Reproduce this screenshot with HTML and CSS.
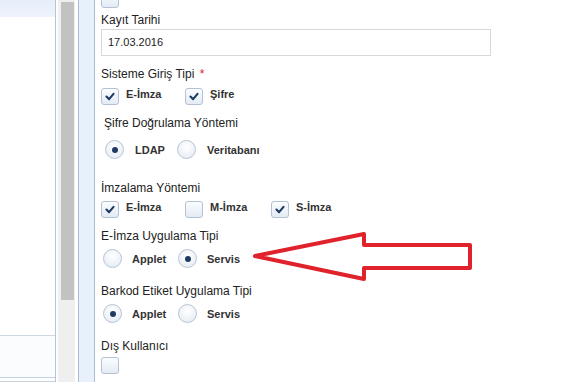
FILE: index.html
```html
<!DOCTYPE html>
<html>
<head>
  <meta charset="UTF-8">
  <title>Kullanıcı</title>
  <link rel="stylesheet" href="styles.css">
</head>
<body>
  <div class="left-panel">
    <div class="left-head"></div>
    <div class="left-list"></div>
    <div class="left-foot"></div>
    <div class="left-end"></div>
  </div>

  <div class="scroll-track"><div class="scroll-thumb"></div></div>

  <div class="side-strip"></div>

  <div class="form">
    <div class="cb top-cb"></div>

    <div class="label first">Kayıt Tarihi</div>
    <div class="input">17.03.2016</div>

    <div class="label gap-md">Sisteme Giriş Tipi <span class="req">*</span></div>
    <div class="row cb-row">
      <div class="opt w84"><div class="cb checked"><svg viewBox="0 0 17 17"><polyline points="4.5,8.5 7.5,11.5 12.5,5.5"/></svg></div><span>E-İmza</span></div>
      <div class="opt"><div class="cb checked"><svg viewBox="0 0 17 17"><polyline points="4.5,8.5 7.5,11.5 12.5,5.5"/></svg></div><span>Şifre</span></div>
    </div>

    <div class="label gap-md indent">Şifre Doğrulama Yöntemi</div>
    <div class="row radio-row ldap">
      <div class="opt w72"><div class="radio on"></div><span>LDAP</span></div>
      <div class="opt"><div class="radio"></div><span>Veritabanı</span></div>
    </div>

    <div class="label gap-lg">İmzalama Yöntemi</div>
    <div class="row cb-row near">
      <div class="opt w84"><div class="cb checked"><svg viewBox="0 0 17 17"><polyline points="4.5,8.5 7.5,11.5 12.5,5.5"/></svg></div><span>E-İmza</span></div>
      <div class="opt w86"><div class="cb"></div><span>M-İmza</span></div>
      <div class="opt"><div class="cb checked"><svg viewBox="0 0 17 17"><polyline points="4.5,8.5 7.5,11.5 12.5,5.5"/></svg></div><span>S-İmza</span></div>
    </div>

    <div class="label gap-md">E-İmza Uygulama Tipi</div>
    <div class="row radio-row near">
      <div class="opt w75"><div class="radio"></div><span>Applet</span></div>
      <div class="opt"><div class="radio on"></div><span>Servis</span></div>
    </div>

    <div class="label gap-lg2">Barkod Etiket Uygulama Tipi</div>
    <div class="row radio-row near">
      <div class="opt w75"><div class="radio on"></div><span>Applet</span></div>
      <div class="opt"><div class="radio"></div><span>Servis</span></div>
    </div>

    <div class="label gap-lg2">Dış Kullanıcı</div>
    <div class="cb last-cb"></div>
  </div>

  <svg class="arrow" width="570" height="382" viewBox="0 0 570 382">
    <polygon points="255,256 364,234 364,245 470,245 470,268 364,268 364,279"/>
  </svg>
</body>
</html>
```

FILE: styles.css
```css
body {
  margin: 0;
  width: 570px;
  height: 382px;
  overflow: hidden;
  display: flex;
  position: relative;
  background: #fff;
  font-family: "Liberation Sans", Arial, sans-serif;
  color: #222;
}

/* left list panel */
.left-panel {
  width: 55px;
  border-right: 1px solid #b3c5da;
  display: flex;
  flex-direction: column;
  flex-shrink: 0;
}
.left-head {
  height: 17px;
  background: linear-gradient(#e6eefa, #eff4fc);
}
.left-list {
  height: 318px;
  border-bottom: 1px solid #cdd8e3;
}
.left-foot {
  height: 41px;
  background: #fafcfe;
  border-bottom: 1px solid #c4d2e0;
}
.left-end {
  margin-top: 3px;
  border-top: 1px solid #c4d2e0;
}

/* scrollbar */
.scroll-track {
  width: 17px;
  margin-left: 2px;
  background: #efefef;
  padding: 2px 1px 0 3px;
  box-sizing: border-box;
  flex-shrink: 0;
}
.scroll-thumb {
  height: 298px;
  background: #c2c2c2;
}

/* side strip */
.side-strip {
  width: 15px;
  margin-left: 3px;
  background: #e8f0fc;
  border-left: 1px solid #a9bdd6;
  border-right: 1px solid #a9bdd6;
  flex-shrink: 0;
}

/* form */
.form {
  flex: 1;
  padding-left: 6px;
}
.label {
  font-size: 12px;
  line-height: 14px;
  height: 14px;
  white-space: nowrap;
}
.label.first { margin-top: 5px; }
.gap-md { margin-top: 11px; }
.gap-lg { margin-top: 22px; }
.gap-lg2 { margin-top: 16px; }
.indent { padding-left: 3px; }
.req { color: #e02020; margin-left: 2px; }

.input {
  margin-top: 2px;
  width: 390px;
  height: 27px;
  box-sizing: border-box;
  border: 1px solid #d3d8dd;
  font-size: 11px;
  line-height: 25px;
  padding-left: 6px;
}

.row {
  display: flex;
  align-items: center;
}
.cb-row { margin-top: 7px; }
.cb-row.near { margin-top: 6px; }
.radio-row.ldap { margin-top: 10px; padding-left: 4px; }
.radio-row.near { margin-top: 6px; padding-left: 2px; }

.opt {
  display: flex;
  align-items: center;
  font-size: 11px;
  font-weight: bold;
  color: #333;
}
.cb-row .opt { align-items: flex-start; }
.cb-row .opt span { line-height: 12px; margin-left: 7px; }
.radio-row .opt span { margin-left: 10px; }
.ldap .opt span { margin-left: 11px; }
.w84 { width: 84px; }
.w86 { width: 86px; }
.w72 { width: 72px; }
.w75 { width: 75px; }

.cb {
  width: 18px;
  height: 17px;
  box-sizing: border-box;
  border: 1px solid #b3c1d2;
  border-radius: 3px;
  background: linear-gradient(#fbfdff, #e4ebf4);
  flex-shrink: 0;
}
.cb svg {
  display: block;
  width: 16px;
  height: 15px;
}
.cb polyline {
  fill: none;
  stroke: #1c3a64;
  stroke-width: 2.4;
  stroke-linecap: round;
  stroke-linejoin: round;
}
.top-cb { margin-top: -9px; }
.last-cb { margin-top: 4px; }

.radio {
  width: 19px;
  height: 19px;
  box-sizing: border-box;
  border-radius: 50%;
  border: 1px solid #b8c5d4;
  background: radial-gradient(circle at 50% 35%, #ffffff, #e2e9f2);
  display: flex;
  align-items: center;
  justify-content: center;
  flex-shrink: 0;
}
.radio.on::after {
  content: "";
  width: 6px;
  height: 6px;
  border-radius: 50%;
  background: #1f3b63;
}

.arrow {
  position: absolute;
  left: 0;
  top: 0;
  pointer-events: none;
}
.arrow polygon {
  fill: #fff;
  stroke: #e0222c;
  stroke-width: 4;
  stroke-linejoin: round;
}
```
